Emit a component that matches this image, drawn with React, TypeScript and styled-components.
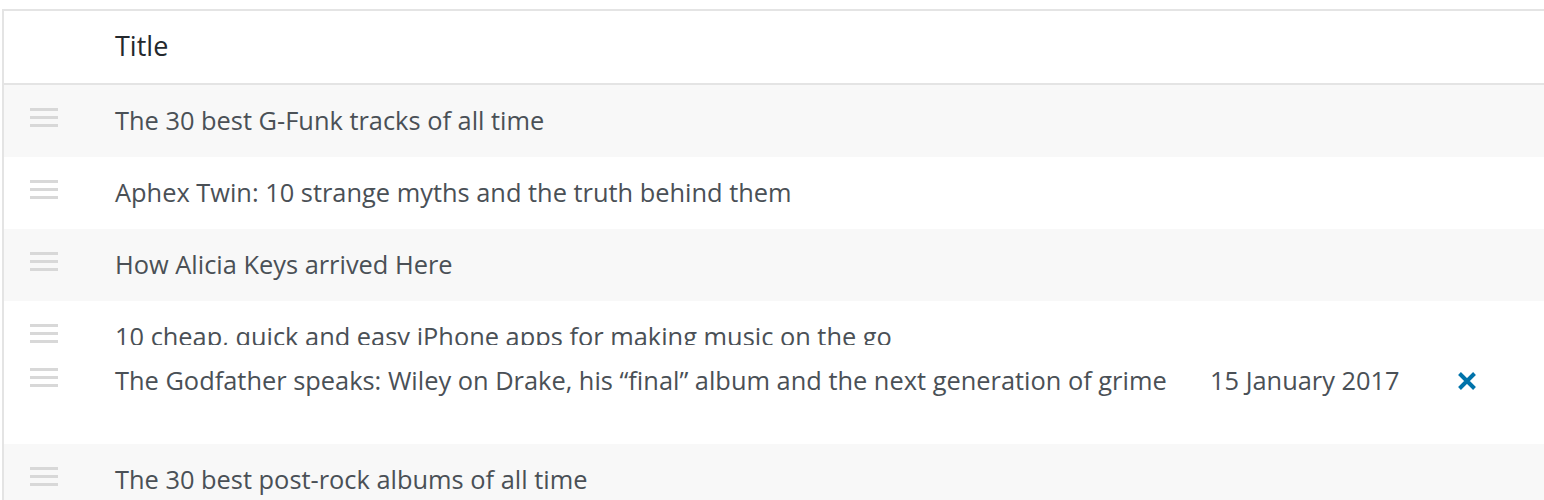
import styled, { createGlobalStyle } from "styled-components";

const GlobalStyle = createGlobalStyle`
body {
  margin: 0;
  background: #ffffff;
  overflow: hidden;
  font-family: "Open Sans", "Noto Sans", sans-serif;
}
`;

interface Post {
    title: string
    striped: boolean
    date?: string
    removable?: boolean
}

const posts: Post[] = [
    { title: "The 30 best G-Funk tracks of all time", striped: true },
    { title: "Aphex Twin: 10 strange myths and the truth behind them", striped: false },
    { title: "How Alicia Keys arrived Here", striped: true },
    { title: "10 cheap, quick and easy iPhone apps for making music on the go", striped: false },
    { title: "The Godfather speaks: Wiley on Drake, his \u201cfinal\u201d album and the next generation of grime", striped: false, date: "15 January 2017", removable: true },
    { title: "The 30 best post-rock albums of all time", striped: true },
];

const Page = styled.div`
padding: 9px 0 0 2px;
`;

const Table = styled.div`
width: 1600px;
border-top: 2px solid #e4e4e4;
border-left: 2px solid #e4e4e4;
`;

const Columns = styled.div`
display: grid;
grid-template-columns: 111px 1095px 247px 80px;
align-items: center;
height: 72px;
`;

const Header = styled(Columns)`
border-bottom: 2px solid #e4e4e4;
`;

const HeaderCell = styled.div`
font-size: 27px;
color: #23282d;
padding-bottom: 3px;
`;

const Row = styled.div<{ $striped: boolean; $height?: number; $extra?: number }>`
background: ${p => (p.$striped ? "#f8f8f8" : "#ffffff")};
height: ${p => (p.$height ? `${p.$height}px` : "auto")};
padding-bottom: ${p => p.$extra || 0}px;
overflow: hidden;
`;

const Cell = styled.div`
font-size: 25.4px;
color: #4a5056;
white-space: nowrap;
padding-bottom: 2px;
`;

const Handle = styled.div`
display: flex;
flex-direction: column;
gap: 5px;
width: 28px;
margin: -8px 0 0 26px;

span {
  display: block;
  height: 3px;
  background: #d8d8d8;
}
`;

const Remove = styled.button`
border: 0;
padding: 0;
background: none;
cursor: pointer;
display: flex;
`;

function DragHandle() {
    return (
        <Handle>
            <span />
            <span />
            <span />
        </Handle>
    )
}

function CrossIcon() {
    return (
        <svg width="20" height="20" viewBox="0 0 20 20">
            <path d="M2.5 2.5 L17.5 17.5 M17.5 2.5 L2.5 17.5" stroke="#0073aa" strokeWidth="4" />
        </svg>
    )
}

export default function App() {
    return (
        <Page>
            <GlobalStyle />
            <Table>
                <Header>
                    <div />
                    <HeaderCell>Title</HeaderCell>
                    <div />
                    <div />
                </Header>
                {posts.map((post, i) => (
                    <Row
                        key={post.title}
                        $striped={post.striped}
                        $height={i === 3 ? 44 : undefined}
                        $extra={i === 4 ? 27 : 0}
                    >
                        <Columns>
                            <DragHandle />
                            <Cell>{post.title}</Cell>
                            <Cell>{post.date}</Cell>
                            <div>
                                {post.removable && (
                                    <Remove aria-label="Remove">
                                        <CrossIcon />
                                    </Remove>
                                )}
                            </div>
                        </Columns>
                    </Row>
                ))}
            </Table>
        </Page>
    )
}
